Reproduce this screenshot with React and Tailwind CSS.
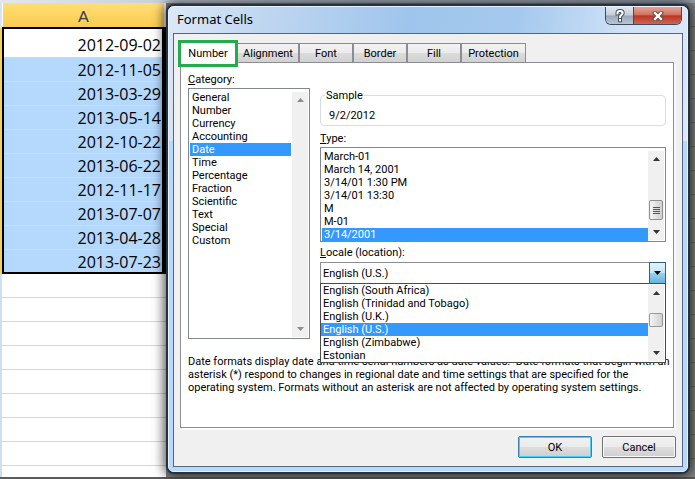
import { useState } from "react";

const dates = [
  "2012-11-05",
  "2013-03-29",
  "2013-05-14",
  "2012-10-22",
  "2013-06-22",
  "2012-11-17",
  "2013-07-07",
  "2013-04-28",
  "2013-07-23",
];

const tabs = [
  { name: "Alignment", width: "w-[62px]" },
  { name: "Font", width: "w-[54px]" },
  { name: "Border", width: "w-[54px]" },
  { name: "Fill", width: "w-[54px]" },
  { name: "Protection", width: "w-[65px]" },
];

const categories = [
  "General",
  "Number",
  "Currency",
  "Accounting",
  "Date",
  "Time",
  "Percentage",
  "Fraction",
  "Scientific",
  "Text",
  "Special",
  "Custom",
];

const types = [
  "March-01",
  "March 14, 2001",
  "3/14/01 1:30 PM",
  "3/14/01 13:30",
  "M",
  "M-01",
  "3/14/2001",
];

const locales = [
  "English (South Africa)",
  "English (Trinidad and Tobago)",
  "English (U.K.)",
  "English (U.S.)",
  "English (Zimbabwe)",
  "Estonian",
];

const Arrow = ({ down, className }) => (
  <svg viewBox="0 0 7 4" className={`w-[7px] h-1 ${className}`} fill="currentColor">
    <path d={down ? "M0 0h7L3.5 4z" : "M0 4h7L3.5 0z"} />
  </svg>
);

const ScrollBar = ({ disabled, children }) => (
  <div
    aria-hidden="true"
    className={`w-4 shrink-0 my-px mr-px flex flex-col items-center bg-[#f0f0f0] ${
      disabled ? "text-[#8c8c8c]" : "text-[#333333]"
    }`}
  >
    <Arrow className="mt-1.5" />
    <div className="flex-1 w-full flex flex-col justify-end">{children}</div>
    <Arrow down className="mb-1.5" />
  </div>
);

const ListBox = ({ id, label, options, value, onChange, className }) => (
  <select
    id={id}
    aria-label={label}
    size={options.length}
    value={value}
    onChange={(e) => onChange(e.target.value)}
    className={`flex-1 min-w-0 appearance-none overflow-hidden bg-white outline-none ${className}`}
  >
    {options.map((o) => (
      <option
        key={o}
        value={o}
        className="h-[13px] min-h-0 px-0.5 py-0 leading-[13px] text-black checked:bg-[linear-gradient(#3399ff,#3399ff)]! checked:text-white!"
      >
        {o}
      </option>
    ))}
  </select>
);

const Sheet = () => (
  <div className="[grid-area:1/1] flex flex-col bg-[#5c5c5c]">
    <div className="h-[3px] bg-gradient-to-r from-[#e3e8ef] via-[#a9b4c0] to-[#98a2ad]" />
    <div className="flex-1 flex overflow-hidden mb-0.5">
      <div className="w-0.5 shrink-0 flex flex-col">
        <div className="h-[25px] bg-[#d6e3f3]" />
        <div className="h-[246px] bg-[#f5cf63]" />
        <div className="flex-1 bg-[#cfdff2]" />
      </div>
      <div className="w-[164px] shrink-0 bg-white">
        <table className="w-full table-fixed border-collapse font-['Open_Sans',sans-serif] text-[16px] leading-5 text-black">
          <thead>
            <tr>
              <th className="h-[25px] p-0 pt-0.5 font-normal font-['Lato',sans-serif] text-[#33404f] bg-gradient-to-b from-[#ffde75] to-[#fbcb4e]">
                A
              </th>
            </tr>
          </thead>
          <tbody className="border-2 border-r-4 border-black text-right">
            <tr>
              <td className="h-[29px] p-0 pr-px pt-1">2012-09-02</td>
            </tr>
            {dates.map((d) => (
              <tr key={d}>
                <td className="h-6 p-0 pr-px pt-0.5 bg-[#b5d8fd] shadow-[inset_0_1px_0_#d8d8da]">{d}</td>
              </tr>
            ))}
          </tbody>
        </table>
        {[1, 2, 3, 4, 5, 6, 7, 8].map((n) => (
          <div key={n} className="h-6 border-b border-[#d5d6d8]" />
        ))}
      </div>
      <div className="flex-1 bg-[repeating-linear-gradient(#858584_0px,#858584_23px,#6f6f6e_23px,#6f6f6e_24px)]" />
    </div>
  </div>
);

const App = () => {
  const [category, setCategory] = useState("Date");
  const [type, setType] = useState("3/14/2001");
  const [locale, setLocale] = useState("English (U.S.)");

  return (
    <div className="min-h-screen grid overflow-hidden">
      <Sheet />

      <div
        role="dialog"
        aria-label="Format Cells"
        className="[grid-area:1/1] self-start mt-1 ml-[166px] mr-[5px] rounded-lg border-2 border-[#26323f] bg-[#b5d8fc] shadow-[0_0_12px_2px_rgba(0,0,0,0.7)] font-['Roboto',sans-serif] text-[11px] leading-[13px] text-black"
      >
        <div className="rounded-md border border-[#e6f2fe] px-1 pb-1 bg-no-repeat bg-[length:100%_134px] bg-[linear-gradient(100deg,#dbe8f7_0%,#bfd6f0_18%,#9fc5ec_45%,#a5c9ee_65%,#cfe2f7_85%,#dbe9f9_100%)]">
          <div className="h-[26px] flex items-start justify-between">
            <h1 className="pl-1 pt-1 font-['Noto_Sans',sans-serif] text-[13px] leading-4">
              Format Cells
            </h1>
            <div className="flex h-[18px] mr-px rounded-b-md border border-t-0 border-[#3f4b5b] overflow-hidden">
              <button
                type="button"
                aria-label="Help"
                className="w-7 flex items-center justify-center border-r border-[#3f4b5b] bg-[linear-gradient(#dfe6ee_0%,#c5ced9_48%,#98a6b8_52%,#b8c6d6_100%)]"
              >
                <svg viewBox="0 0 12 14" className="w-3 h-3.5" fill="none" strokeLinecap="square">
                  <path d="M3.5 4.5V3.8C3.5 2.5 4.5 2 6 2s2.700.6 2.700 2c0 2-2.700 2-2.700 4M6 11v.2" stroke="#46505e" strokeWidth="4" />
                  <path d="M3.500 4.500V3.800C3.500 2.500 4.500 2 6 2s2.700.6 2.700 2c0 2-2.700 2-2.700 4M6 11v.2" stroke="#fff" strokeWidth="2" />
                </svg>
              </button>
              <button
                type="button"
                aria-label="Close"
                className="w-[47px] flex items-center justify-center bg-[linear-gradient(#e3a396_0%,#d3705f_46%,#b93424_52%,#d4644c_100%)]"
              >
                <svg viewBox="0 0 12 10" className="w-3 h-2.5" fill="none" strokeLinecap="square">
                  <path d="M3 2l6 6M9 2L3 8" stroke="#5a4648" strokeWidth="4.200" />
                  <path d="M3 2l6 6M9 2L3 8" stroke="#fff" strokeWidth="2.400" />
                </svg>
              </button>
            </div>
          </div>

          <div className="border border-[#56657a] bg-[#f0f0f0] px-1.5 pt-[9px] pb-2">
            <div role="tablist" className="flex h-[19px]">
              <button type="button" role="tab" aria-selected="true" className="relative w-[57px] bg-white">
                <span className="absolute -left-0.5 -right-px -top-[3px] -bottom-[5px] bg-white border-3 border-[#22ac4b] flex items-center justify-center">
                  Number
                </span>
              </button>
              {tabs.map((t) => (
                <button
                  key={t.name}
                  type="button"
                  role="tab"
                  aria-selected="false"
                  className={`${t.width} border border-b-0 border-[#8b8d92] bg-[linear-gradient(#f3f3f3_0%,#ebebeb_48%,#dcdcdc_52%,#d1d1d1_100%)]`}
                >
                  {t.name}
                </button>
              ))}
            </div>

            <div className="border border-[#8b8d92] bg-white pl-[7px] pr-[7px] pt-2.5 pb-[33px] mr-0.5 shadow-[2px_2px_0_#fafafa]">
              <div className="flex gap-2.5">
                <div className="w-[122px] shrink-0">
                  <label htmlFor="category" className="block">
                    <u>C</u>ategory:
                  </label>
                  <div className="mt-0.5 h-[251px] flex border border-[#828790] pl-px pt-0.5">
                    <ListBox
                      id="category"
                      options={categories}
                      value={category}
                      onChange={setCategory}
                      className="h-[156px] mr-px"
                    />
                    <ScrollBar disabled />
                  </div>
                </div>

                <div className="flex-1 min-w-0 pt-4">
                  <fieldset className="h-[37px] rounded-sm border border-[#d5dfe5] px-2">
                    <legend className="-ml-1 px-px">Sample</legend>
                    <output className="block pt-[7px]">9/2/2012</output>
                  </fieldset>

                  <label htmlFor="type" className="block mt-1.5">
                    <u>T</u>ype:
                  </label>
                  <div className="mt-0.5 flex border border-[#828790] pl-px pt-0.5">
                    <ListBox
                      id="type"
                      options={types}
                      value={type}
                      onChange={setType}
                      className="h-[91px]"
                    />
                    <ScrollBar>
                      <div className="h-5 mb-2.5 mx-px rounded-xs border border-[#8f8f8f] bg-gradient-to-r from-[#f5f5f5] to-[#d0d0d0] flex flex-col items-center justify-center gap-px">
                        <i className="w-[7px] h-px bg-[#555555]" />
                        <i className="w-[7px] h-px bg-[#555555]" />
                        <i className="w-[7px] h-px bg-[#555555]" />
                        <i className="w-[7px] h-px bg-[#555555]" />
                      </div>
                    </ScrollBar>
                  </div>

                  <label htmlFor="locale" className="block mt-1">
                    <u>L</u>ocale (location):
                  </label>
                  <div className="relative mt-[3px]">
                    <div className="flex h-[22px] border border-[#8b8d92]">
                      <select
                        id="locale"
                        value={locale}
                        onChange={(e) => setLocale(e.target.value)}
                        className="flex-1 min-w-0 appearance-none px-0.5 bg-white outline-none"
                      >
                        {locales.map((l) => (
                          <option key={l}>{l}</option>
                        ))}
                      </select>
                      <span className="-my-px -mr-px w-[17px] border border-[#2c628b] bg-[linear-gradient(#e3f4fc_0%,#c4e5f6_48%,#98d1ef_52%,#68b3db_100%)] flex items-center justify-center">
                        <Arrow down />
                      </span>
                    </div>
                    <div className="absolute inset-x-0 top-[21px] flex border border-[#4a4a4a] bg-white">
                      <ListBox
                        label="Locales"
                        options={locales}
                        value={locale}
                        onChange={setLocale}
                        className="h-[78px]"
                      />
                      <ScrollBar>
                        <div className="h-3.5 mb-6 mx-px rounded-xs border border-[#979797] bg-gradient-to-r from-[#f5f5f5] to-[#d0d0d0]" />
                      </ScrollBar>
                    </div>
                  </div>
                </div>
              </div>

              <p className="mt-4 -mr-1.5 whitespace-pre-wrap">
                {"Date formats display date and time serial numbers as date values.  Date formats that begin with an asterisk (*) respond to changes in regional date and time settings that are specified for the operating system. Formats without an asterisk are not affected by operating system settings."}
              </p>
            </div>

            <div className="mt-2 flex justify-end gap-2.5">
              <button
                type="button"
                className="w-[74px] h-[22px] rounded-xs border border-[#3c7fb1] shadow-[inset_0_0_0_1px_#46d0f6] bg-[linear-gradient(#f2f2f2_0%,#ebebeb_48%,#dddddd_52%,#cfcfcf_100%)]"
              >
                OK
              </button>
              <button
                type="button"
                className="w-[74px] h-[22px] rounded-xs border border-[#707070] shadow-[inset_0_0_0_1px_#fafafa] bg-[linear-gradient(#f2f2f2_0%,#ebebeb_48%,#dddddd_52%,#cfcfcf_100%)]"
              >
                Cancel
              </button>
            </div>
          </div>
        </div>
      </div>
    </div>
  );
};

export default App;
